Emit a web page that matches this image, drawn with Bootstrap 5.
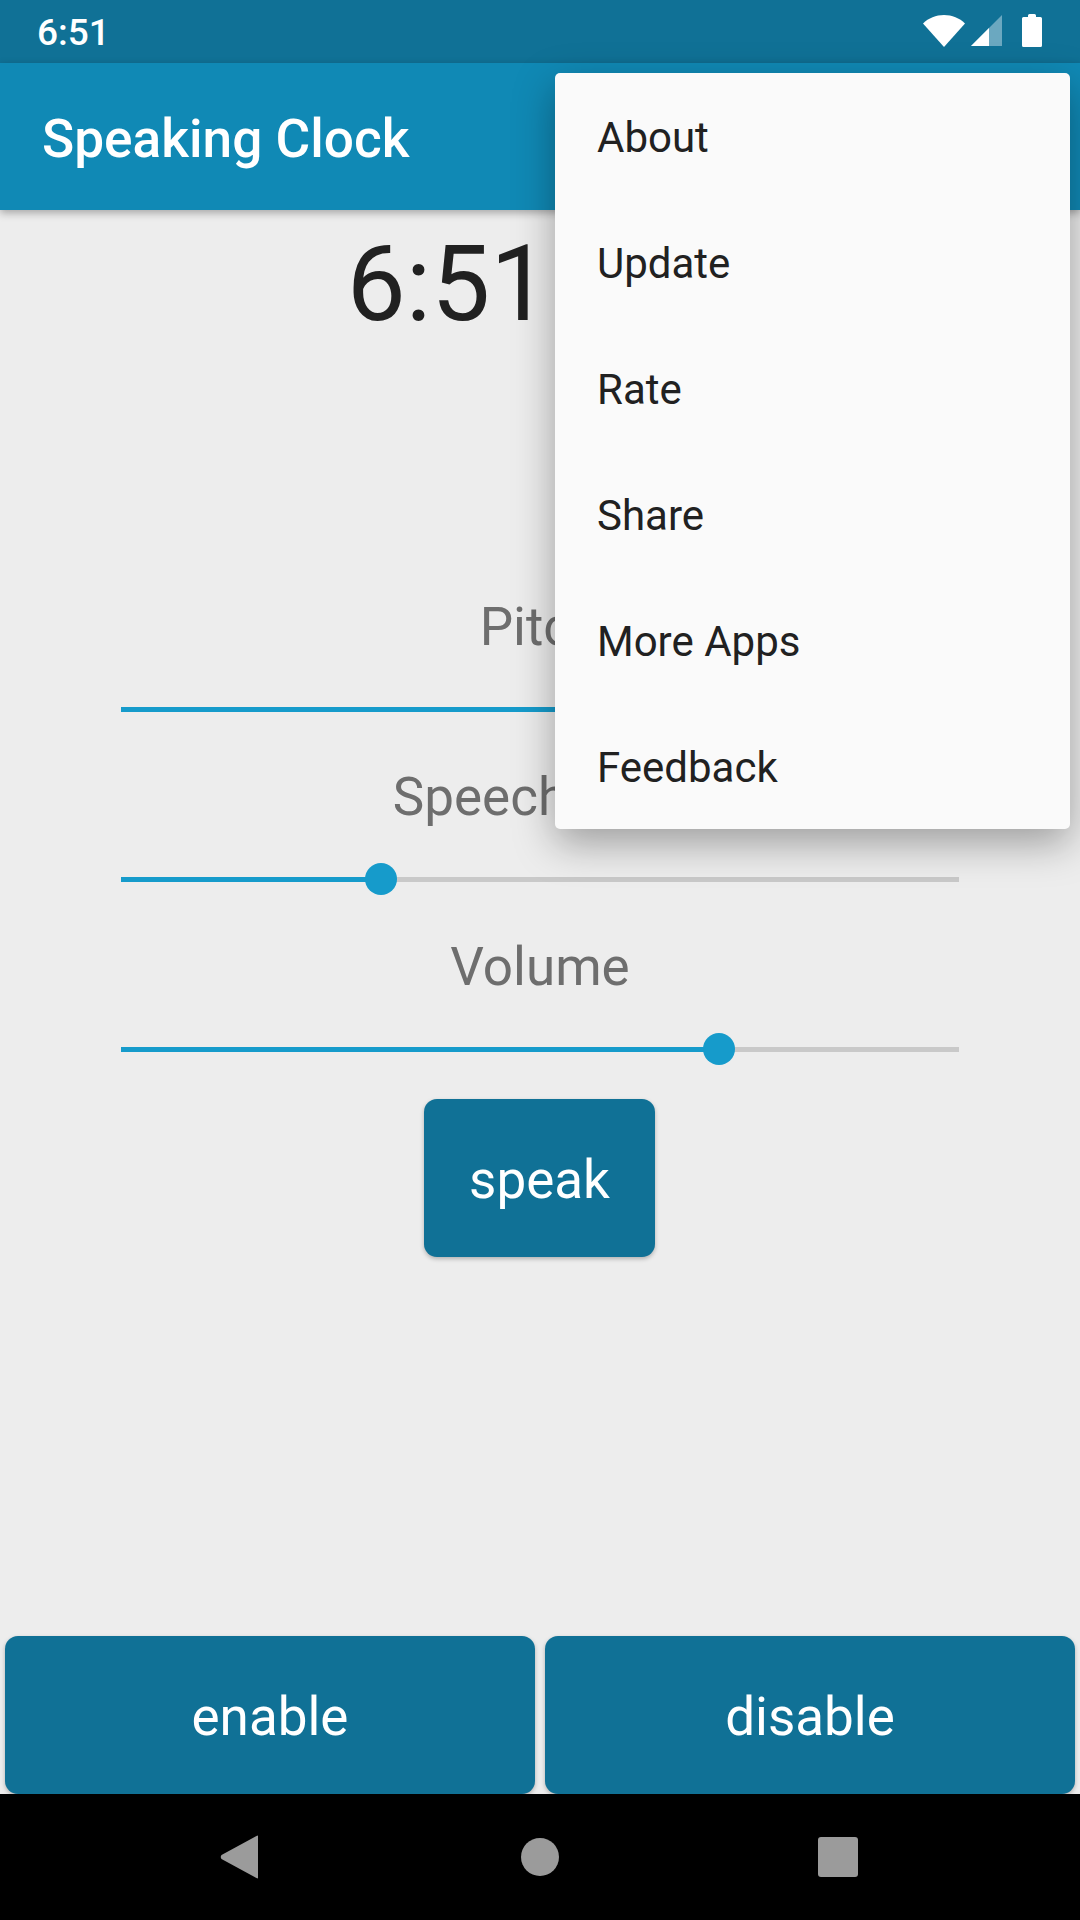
<!DOCTYPE html>
<html lang="en">
<head>
  <meta charset="utf-8">
  <link rel="stylesheet" href="https://cdn.jsdelivr.net/npm/bootstrap@5.3.2/dist/css/bootstrap.min.css">
  <style>
    body { width: 1080px; height: 1920px; overflow: hidden; background: #ededed; font-family: Roboto, "Liberation Sans", sans-serif; }
    .screen { width: 1080px; height: 1920px; }
    .status-bar { height: 63px; background: #107196; color: #fff; font-size: 37px; font-weight: 500; padding: 2px 38px 0 37px; }
    .status-icons { margin-top: -4px; }
    .tool-bar { height: 147px; background: #1089b5; color: #fff; font-size: 53.2px; font-weight: 500; padding: 6px 0 0 42px; box-shadow: 0 3px 8px rgba(0,0,0,.3); z-index: 2; }
    .clock-text { font-size: 105px; line-height: 123px; color: #212121; margin-top: 13px; margin-bottom: 250px; }
    .label-text { font-size: 53px; line-height: 62px; color: #6e6e6e; }
    .slider-wrap { width: 838px; height: 42px; margin: 30px 0 36px; }
    .slider-track { height: 5px; background: #c9c9c9; border-radius: 0; }
    .slider-fill { background: #169bcb; }
    .slider-thumb { position: absolute; top: 5px; width: 32px; height: 32px; margin-left: -16px; border-radius: 50%; background: #169bcb; }
    .app-btn { background: #107196; color: #fff; border: 0; border-radius: 13px; font-size: 53px; padding-top: 11px; box-shadow: 0 2px 4px rgba(0,0,0,.25); }
    .app-btn:hover { background: #107196; color: #fff; }
    .speak-btn { width: 231px; height: 158px; margin: -7px 1px 0 0; }
    .bottom-btns { padding: 0 5px; gap: 10px; height: 158px; }
    .nav-bar { height: 126px; background: #000; }
    .nav-bar svg { display: block; }
    .nav-slot { width: 299px; }
    .nav-back { margin-right: 4px; }
    .nav-recent { margin-right: 2px; }
    .over-menu { top: 73px; left: 555px; width: 515px; padding: 0; margin: 0; background: #fafafa; border: 0; border-radius: 5px; box-shadow: 0 14px 40px rgba(0,0,0,.34); z-index: 5; }
    .over-menu .dropdown-item { height: 126px; padding: 2px 42px 0; font-size: 42px; color: #212121; display: flex; align-items: center; }
    .wifi-icon { margin-right: 6px; }
    .cell-icon { margin-right: 20px; }
  </style>
</head>
<body>
  <div class="screen d-flex flex-column position-relative">

    <div class="status-bar d-flex align-items-center justify-content-between">
      <span>6:51</span>
      <div class="status-icons d-flex align-items-center">
        <svg class="wifi-icon" width="42" height="32" viewBox="0 0 42 32"><path d="M0 8.500C5.500 3 13 0 21 0s15.500 3 21 8.500L21 32z" fill="#fff"/></svg>
        <svg class="cell-icon" width="31" height="31" viewBox="0 0 31 31"><path d="M0 31L31 0v31z" fill="#6ba8c0"/><path d="M0 31L18 13v18z" fill="#fff"/></svg>
        <svg width="20" height="33" viewBox="0 0 20 33"><path d="M6 3V1.500Q6 0 7.500 0h5Q14 0 14 1.500V3h4.500Q20 3 20 4.500v27Q20 33 18.500 33h-17Q0 33 0 31.500v-27Q0 3 1.500 3z" fill="#fff"/></svg>
      </div>
    </div>

    <div class="tool-bar d-flex align-items-center">Speaking Clock</div>

    <main class="flex-grow-1 d-flex flex-column align-items-center">
      <div class="clock-text">6:51 PM</div>

      <div class="label-text">Pitch</div>
      <div class="slider-wrap position-relative d-flex align-items-center">
        <div class="slider-track progress w-100"><div class="slider-fill progress-bar" style="width: 60%"></div></div>
      </div>

      <div class="label-text">Speech Rate</div>
      <div class="slider-wrap position-relative d-flex align-items-center">
        <div class="slider-track progress w-100"><div class="slider-fill progress-bar" style="width: 31%"></div></div>
        <div class="slider-thumb" style="left: 31%"></div>
      </div>

      <div class="label-text">Volume</div>
      <div class="slider-wrap position-relative d-flex align-items-center">
        <div class="slider-track progress w-100"><div class="slider-fill progress-bar" style="width: 71.4%"></div></div>
        <div class="slider-thumb" style="left: 71.4%"></div>
      </div>

      <button class="app-btn speak-btn btn" type="button">speak</button>
    </main>

    <div class="bottom-btns d-flex">
      <button class="app-btn btn flex-fill w-50" type="button">enable</button>
      <button class="app-btn btn flex-fill w-50" type="button">disable</button>
    </div>

    <div class="nav-bar d-flex align-items-center justify-content-center">
      <div class="nav-slot d-flex justify-content-center">
        <svg class="nav-back" width="38" height="44" viewBox="0 0 38 44"><path d="M38 1.500V42.500Q38 44 36.500 43L1.500 24Q0 22 1.500 20L36.500 1Q38 0 38 1.500z" fill="#9b9b9b"/></svg>
      </div>
      <div class="nav-slot d-flex justify-content-center">
        <svg width="38" height="38" viewBox="0 0 38 38"><circle cx="19" cy="19" r="19" fill="#9b9b9b"/></svg>
      </div>
      <div class="nav-slot d-flex justify-content-center">
        <svg class="nav-recent" width="40" height="40" viewBox="0 0 40 40"><rect width="40" height="40" rx="3" fill="#9b9b9b"/></svg>
      </div>
    </div>

    <ul class="over-menu dropdown-menu show position-absolute list-unstyled">
      <li><a class="dropdown-item" href="#">About</a></li>
      <li><a class="dropdown-item" href="#">Update</a></li>
      <li><a class="dropdown-item" href="#">Rate</a></li>
      <li><a class="dropdown-item" href="#">Share</a></li>
      <li><a class="dropdown-item" href="#">More Apps</a></li>
      <li><a class="dropdown-item" href="#">Feedback</a></li>
    </ul>
  </div>

  <script src="https://cdn.jsdelivr.net/npm/bootstrap@5.3.2/dist/js/bootstrap.bundle.min.js"></script>
</body>
</html>
